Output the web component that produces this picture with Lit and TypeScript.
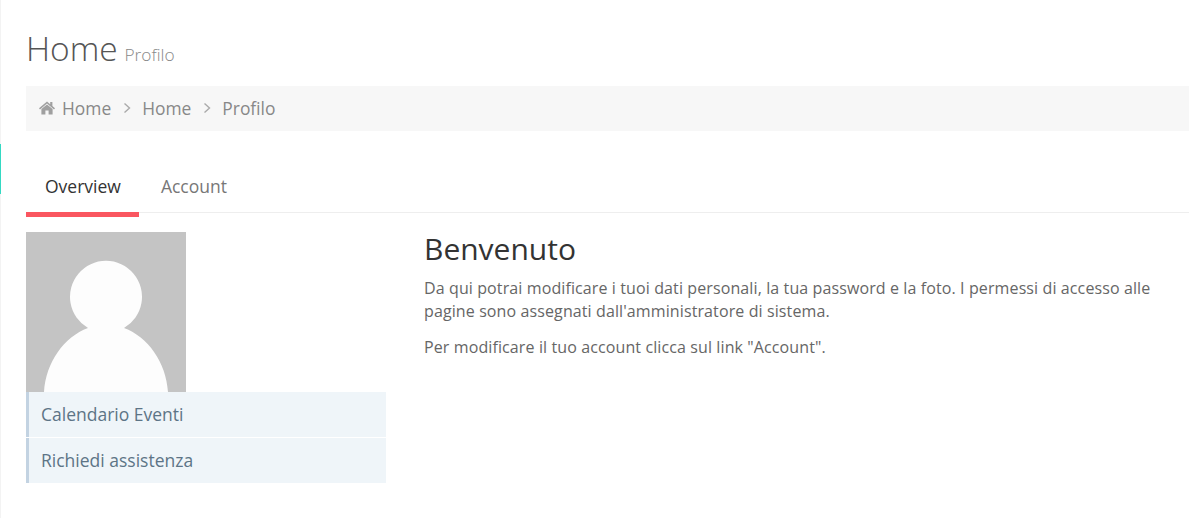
import { LitElement, html, css } from "lit";
import { customElement } from "lit/decorators.js";

@customElement("app-root")
export class AppRoot extends LitElement {
  static styles = css`
    :host { display: block; height: 518px; overflow: hidden; background: #fff; font-family: "Open Sans", sans-serif; color: #666; }
    .rail { position: absolute; left: 0; top: 0; width: 1px; height: 518px; background: #f3f3f3; }
    .rail i { position: absolute; left: 0; top: 144px; width: 1px; height: 50px; background: #34d9c3; }
    .page { padding: 25px 0 0 26px; }
    h1 { margin: 0; height: 61px; font-weight: 300; font-size: 33.5px; line-height: 46px; color: #555; }
    h1 small { font-size: 17.3px; font-weight: 300; color: #888; margin-left: -2px; }
    .crumb { height: 44px; padding-bottom: 1px; background: #f7f7f7; display: flex; align-items: center; padding-left: 13px; font-size: 17.4px; color: #888; }
    .crumb svg.home { width: 16px; height: 14px; margin-right: 7px; fill: #a0a0a0; }
    .crumb svg.sep { width: 8px; height: 12px; margin: 0 11px 0 12px; fill: none; stroke: #aaa; stroke-width: 1.4; }
    .tabs { margin-top: 37px; height: 44px; border-bottom: 1px solid #eee; display: flex; font-size: 17.5px; line-height: 24px; }
    .tab { padding: 6px 18px 0 19px; color: #777; position: relative; margin-right: 3px; }
    .tab.on { color: #333; }
    .tab.on::after { content: ""; position: absolute; left: 0; right: 0; bottom: -5px; height: 5px; background: #fa5660; }
    .body { display: flex; margin-top: 19px; }
    .side { width: 360px; margin-right: 38px; flex: none; }
    .avatar { display: block; width: 160px; height: 160px; }
    .item { height: 45px; line-height: 45px; border-left: 3px solid #c3d3e2; background: #eff5f9; padding-left: 12px; font-size: 17.5px; color: #5d7486; margin-bottom: 1px; }
    .main { flex: 1; min-width: 0; padding-right: 10px; }
    h2 { margin: -1px 0 0; font-weight: 400; font-size: 30px; line-height: 36px; color: #333; }
    p { margin: 0 0 13px; font-size: 16px; letter-spacing: .11px; line-height: 23px; color: #666; }
    h2 + p { margin-top: 10px; }
  `;
  render() {
    const sep = html`<svg class="sep" viewBox="0 0 8 12"><path d="M1.5 1.5 6.5 6 1.5 10.5"/></svg>`;
    return html`
      <div class="rail"><i></i></div>
      <div class="page">
        <h1>Home <small>Profilo</small></h1>
        <div class="crumb">
          <svg class="home" viewBox="0 0 16 14"><path d="M8 0.4 0 7.2 1 8.4 8 2.6 15 8.4 16 7.2 13.4 5V1H11.2V3.2ZM8 3.4 2.4 8V13.6H6.4V9.4H9.6V13.6H13.6V8Z"/></svg>
          <span>Home</span>${sep}<span>Home</span>${sep}<span>Profilo</span>
        </div>
        <div class="tabs">
          <div class="tab on">Overview</div>
          <div class="tab">Account</div>
        </div>
        <div class="body">
          <div class="side">
            <svg class="avatar" viewBox="0 0 160 160">
              <rect width="160" height="160" fill="#c4c4c4"/>
              <path d="M18 160C20 130 38 105 62 96A36 36 0 1 1 98 96C122 105 140 130 142 160Z" fill="#fdfdfd"/>
            </svg>
            <div class="item">Calendario Eventi</div>
            <div class="item">Richiedi assistenza</div>
          </div>
          <div class="main">
            <h2>Benvenuto</h2>
            <p>Da qui potrai modificare i tuoi dati personali, la tua password e la foto. I permessi di accesso alle pagine sono assegnati dall'amministratore di sistema.</p>
            <p>Per modificare il tuo account clicca sul link "Account".</p>
          </div>
        </div>
      </div>
    `;
  }
}
